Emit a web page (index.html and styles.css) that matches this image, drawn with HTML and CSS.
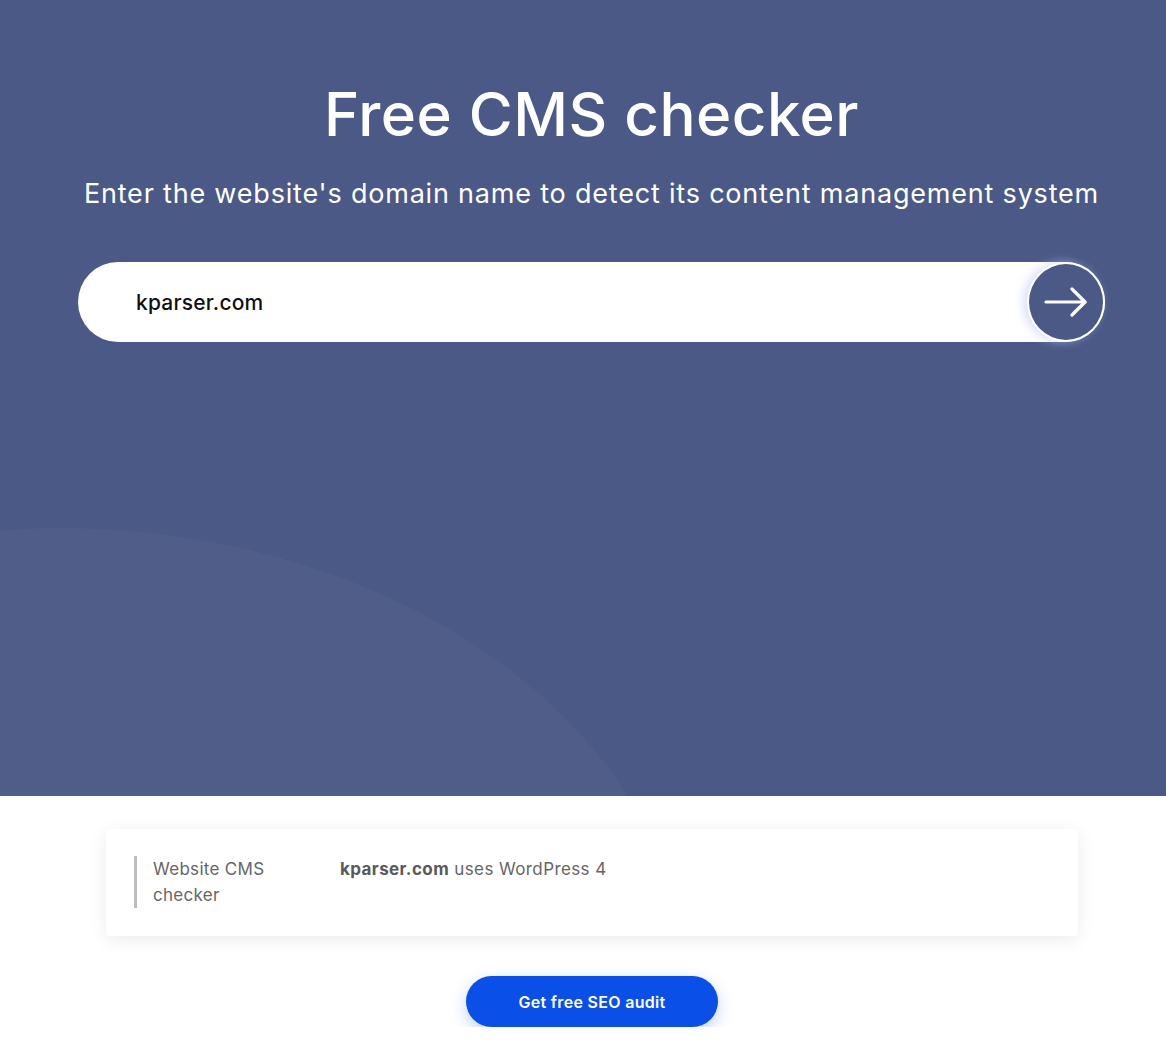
FILE: index.html
```html
<!DOCTYPE html>
<html lang="en">
<head>
<meta charset="utf-8">
<title>Free CMS checker</title>
<link rel="stylesheet" href="styles.css">
</head>
<body>
<section class="hero">
  <div class="hero-curve"></div>
  <div class="hero-inner">
    <h1 class="title">Free CMS checker</h1>
    <p class="subtitle">Enter the website's domain name to detect its content management system</p>
    <form class="search">
      <span class="search-value">kparser.com</span>
      <button type="button" class="search-btn" aria-label="Check">
        <svg width="44" height="30" viewBox="0 0 44 30" fill="none" stroke="#fff" stroke-width="3.2" stroke-linecap="round" stroke-linejoin="round">
          <path d="M2 15 H41"/>
          <path d="M28 2 L41 15 L28 28"/>
        </svg>
      </button>
    </form>
  </div>
</section>
<section class="results">
  <div class="card">
    <div class="card-label">Website CMS checker</div>
    <div class="card-value"><b>kparser.com</b> uses WordPress 4</div>
  </div>
  <div class="cta-wrap">
    <a class="cta" href="#">Get free SEO audit</a>
  </div>
</section>
</body>
</html>
```

FILE: styles.css
```css
* { box-sizing: border-box; }
html, body { margin: 0; padding: 0; }
body {
  font-family: Inter, "Open Sans", "Liberation Sans", sans-serif;
  background: #fff;
  width: 1166px;
  overflow: hidden;
}
.hero {
  position: relative;
  height: 796px;
  background: #4a5985;
  overflow: hidden;
}
.hero-curve {
  position: absolute;
  left: -570px;
  top: 528px;
  width: 1260px;
  height: 944px;
  border-radius: 50%;
  background: #4f5d88;
}
.hero-inner {
  position: relative;
  display: flex;
  flex-direction: column;
  align-items: center;
  padding-top: 76px;
  padding-left: 17px;
}
.title {
  margin: 0;
  color: #fff;
  font-size: 60px;
  font-weight: 500;
  line-height: 76px;
  letter-spacing: 0.5px;
}
.subtitle {
  margin: 24px 0 0;
  color: #fff;
  font-size: 27px;
  font-weight: 400;
  line-height: 36px;
  letter-spacing: 0.8px;
}
.search {
  margin-top: 50px;
  width: 1027px;
  height: 80px;
  background: #fff;
  border-radius: 40px;
  display: flex;
  align-items: center;
  justify-content: space-between;
  padding-left: 58px;
}
.search-value {
  font-size: 21px;
  font-weight: 500;
  color: #111;
  letter-spacing: 0.2px;
}
.search-btn {
  width: 78px;
  height: 80px;
  border-radius: 50%;
  border: 2px solid #fff;
  background: #4a5985;
  display: flex;
  align-items: center;
  justify-content: center;
  padding: 0;
  box-shadow: -4px 0 10px rgba(190, 200, 255, 0.6);
  cursor: pointer;
}
.results {
  padding: 33px 0 0;
  display: flex;
  flex-direction: column;
  align-items: center;
}
.card {
  width: 972px;
  min-height: 107px;
  background: #fff;
  border-radius: 4px;
  box-shadow: 0 4px 18px rgba(0, 0, 0, 0.08);
  padding: 27px 28px 28px;
  display: flex;
  align-items: flex-start;
  align-self: flex-start;
  margin-left: 106px;
}
.card-label {
  width: 206px;
  border-left: 3px solid #bdbdbd;
  padding-left: 16px;
  padding-right: 60px;
  font-size: 17px;
  line-height: 26px;
  color: #666;
  letter-spacing: 0.3px;
}
.card-value {
  font-size: 17px;
  line-height: 26px;
  color: #666;
  letter-spacing: 0.4px;
}
.card-value b { color: #5a5a5a; font-weight: 700; }
.cta-wrap {
  margin-top: 40px;
  display: flex;
  justify-content: center;
  margin-left: 18px;
}
.cta {
  display: flex;
  align-items: center;
  justify-content: center;
  width: 252px;
  height: 51px;
  border-radius: 26px;
  background: #0a4fe8;
  color: #fff;
  font-size: 16px;
  font-weight: 600;
  letter-spacing: 0.3px;
  text-decoration: none;
  box-shadow: 0 6px 16px rgba(10, 79, 232, 0.25);
}
```
